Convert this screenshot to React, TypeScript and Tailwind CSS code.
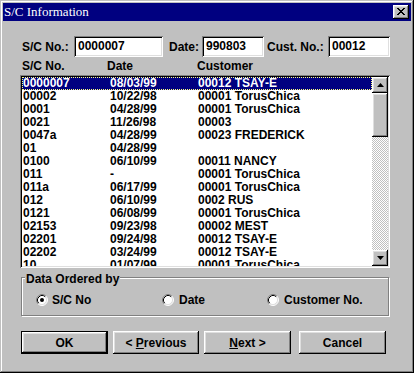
const rows = [
  ["0000007", "08/03/99", "00012 TSAY-E"],
  ["00002", "10/22/98", "00001 TorusChica"],
  ["0001", "04/28/99", "00001 TorusChica"],
  ["0021", "11/26/98", "00003"],
  ["0047a", "04/28/99", "00023 FREDERICK"],
  ["01", "04/28/99", ""],
  ["0100", "06/10/99", "00011 NANCY"],
  ["011", "-", "00001 TorusChica"],
  ["011a", "06/17/99", "00001 TorusChica"],
  ["012", "06/10/99", "0002 RUS"],
  ["0121", "06/08/99", "00001 TorusChica"],
  ["02153", "09/23/98", "00002 MEST"],
  ["02201", "09/24/98", "00012 TSAY-E"],
  ["02202", "03/24/99", "00012 TSAY-E"],
  ["10", "01/07/99", "00001 TorusChica"],
];

const raised =
  "shadow-[inset_-1px_-1px_0_#000,inset_1px_1px_0_#fff,inset_-2px_-2px_0_#808080,inset_2px_2px_0_#dfdfdf]";
const sunken =
  "shadow-[inset_1px_1px_0_#808080,inset_-1px_-1px_0_#fff,inset_2px_2px_0_#000,inset_-2px_-2px_0_#dfdfdf]";

const Radio = ({ checked }: { checked?: boolean }) => (
  <svg width="12" height="12" viewBox="0 0 12 12" className="shrink-0">
    <circle cx="6" cy="6" r="5" fill="#fff" />
    <path d="M2.11 9.89 A5.5 5.5 0 0 1 9.89 2.11" stroke="#808080" fill="none" />
    <path d="M9.89 2.11 A5.5 5.5 0 0 1 2.11 9.89" stroke="#fff" fill="none" />
    <path d="M2.82 9.18 A4.5 4.5 0 0 1 9.18 2.82" stroke="#000" fill="none" />
    <path d="M9.18 2.82 A4.5 4.5 0 0 1 2.82 9.18" stroke="#dfdfdf" fill="none" />
    {checked && <circle cx="6" cy="6" r="2" fill="#000" />}
  </svg>
);

const Arrow = ({ down }: { down?: boolean }) => (
  <svg width="7" height="4" viewBox="0 0 7 4">
    <path d={down ? "M0 0h7L3.5 4z" : "M3.5 0L7 4H0z"} fill="#000" />
  </svg>
);

const Field = ({ value, width }: { value: string; width: string }) => (
  <div className={`${width} h-[21px] bg-white p-[2px] pl-[4px] ${sunken} flex items-center`}>
    <span className="leading-[13px]">{value}</span>
  </div>
);

export default function App() {
  return (
    <div
      className={`w-[414px] h-[373px] bg-[#c0c0c0] p-[3px] font-['Liberation_Sans',Arial,sans-serif] text-[12px] font-bold text-black shadow-[inset_-1px_-1px_0_#000,inset_1px_1px_0_#c0c0c0,inset_-2px_-2px_0_#808080,inset_2px_2px_0_#fff]`}
    >
      <div className="flex h-[18px] items-center justify-between bg-[#000080] pl-[1px] pr-[2px]">
        <span className="font-['Liberation_Serif',serif] text-[13px] font-normal leading-[18px] text-white">
          S/C Information
        </span>
        <div className={`flex h-[14px] w-[16px] items-center justify-center bg-[#c0c0c0] ${raised}`}>
          <svg width="8" height="7" viewBox="0 0 8 7" className="mb-[1px]">
            <path
              d="M0 0h2v1H0zM6 0h2v1H6zM1 1h2v1H1zM5 1h2v1H5zM2 2h4v1H2zM3 3h2v1H3zM2 4h4v1H2zM1 5h2v1H1zM5 5h2v1H5zM0 6h2v1H0zM6 6h2v1H6z"
              fill="#000"
            />
          </svg>
        </div>
      </div>

      <div className="flex w-[370px] flex-col pl-[17px] box-content">
        <div className="mt-[15px] flex h-[21px] items-center">
          <span className="w-[54px] pl-[2px]">S/C No.:</span>
          <Field value="0000007" width="w-[89px]" />
          <span className="w-[39px] pl-[6px]">Date:</span>
          <Field value="990803" width="w-[62px]" />
          <span className="w-[64px] pl-[3px]">Cust. No.:</span>
          <Field value="00012" width="w-[62px]" />
        </div>

        <div className="mt-[3px] flex h-[13px] leading-[13px]">
          <span className="w-[87px] pl-[2px]">S/C No.</span>
          <span className="w-[90px]">Date</span>
          <span>Customer</span>
        </div>

        <div className={`mt-[2px] flex h-[193px] bg-white p-[2px] ${sunken}`}>
          <div className="flex-1 overflow-hidden">
            {rows.map((r, i) => (
              <div
                key={i}
                className={`flex h-[13px] border leading-[11px] ${
                  i === 0 ? "border-dotted border-[#ffff80] bg-[#000080] text-white" : "border-transparent"
                }`}
              >
                <span className="w-[87px] whitespace-nowrap">{r[0]}</span>
                <span className="w-[88px] whitespace-nowrap">{r[1]}</span>
                <span className="whitespace-nowrap">{r[2]}</span>
              </div>
            ))}
          </div>
          <div className="flex w-[16px] flex-col">
            <div className={`flex h-[16px] items-center justify-center bg-[#c0c0c0] ${raised}`}>
              <Arrow />
            </div>
            <div className={`h-[44px] bg-[#c0c0c0] ${raised}`} />
            <div className="flex-1 bg-[repeating-conic-gradient(#c0c0c0_0%_25%,#fff_0%_50%)] bg-[length:2px_2px]" />
            <div className={`flex h-[16px] items-center justify-center bg-[#c0c0c0] ${raised}`}>
              <Arrow down />
            </div>
          </div>
        </div>

        <div className="relative ml-[1px] mt-[9px] h-[39px] w-[368px] border border-[#808080] shadow-[inset_1px_1px_0_#fff,1px_1px_0_#fff]">
          <span className="absolute -top-[5px] left-[3px] bg-[#c0c0c0] px-[1px] leading-[13px]">
            Data Ordered by
          </span>
          <div className="flex h-full items-center pl-[14px] pt-[6px]">
            <div className="flex w-[126px] items-center gap-[4px]">
              <Radio checked />
              <span>S/C No</span>
            </div>
            <div className="flex w-[105px] items-center gap-[5px]">
              <Radio />
              <span>Date</span>
            </div>
            <div className="flex items-center gap-[5px]">
              <Radio />
              <span>Customer No.</span>
            </div>
          </div>
        </div>

        <div className="ml-[1px] mt-[15px] flex h-[23px]">
          <div className="flex w-[87px] items-center justify-center border border-black bg-[#c0c0c0]">
            <div className={`flex h-full w-full items-center justify-center ${raised}`}>OK</div>
          </div>
          <div className={`ml-[5px] flex w-[86px] items-center justify-center bg-[#c0c0c0] ${raised}`}>
            <span>
              &lt; <u className="underline-offset-1">P</u>revious
            </span>
          </div>
          <div className={`ml-[5px] flex w-[87px] items-center justify-center bg-[#c0c0c0] ${raised}`}>
            <span>
              <u className="underline-offset-1">N</u>ext &gt;
            </span>
          </div>
          <div className={`ml-[8px] flex w-[87px] items-center justify-center bg-[#c0c0c0] ${raised}`}>
            Cancel
          </div>
        </div>
      </div>
    </div>
  );
}
